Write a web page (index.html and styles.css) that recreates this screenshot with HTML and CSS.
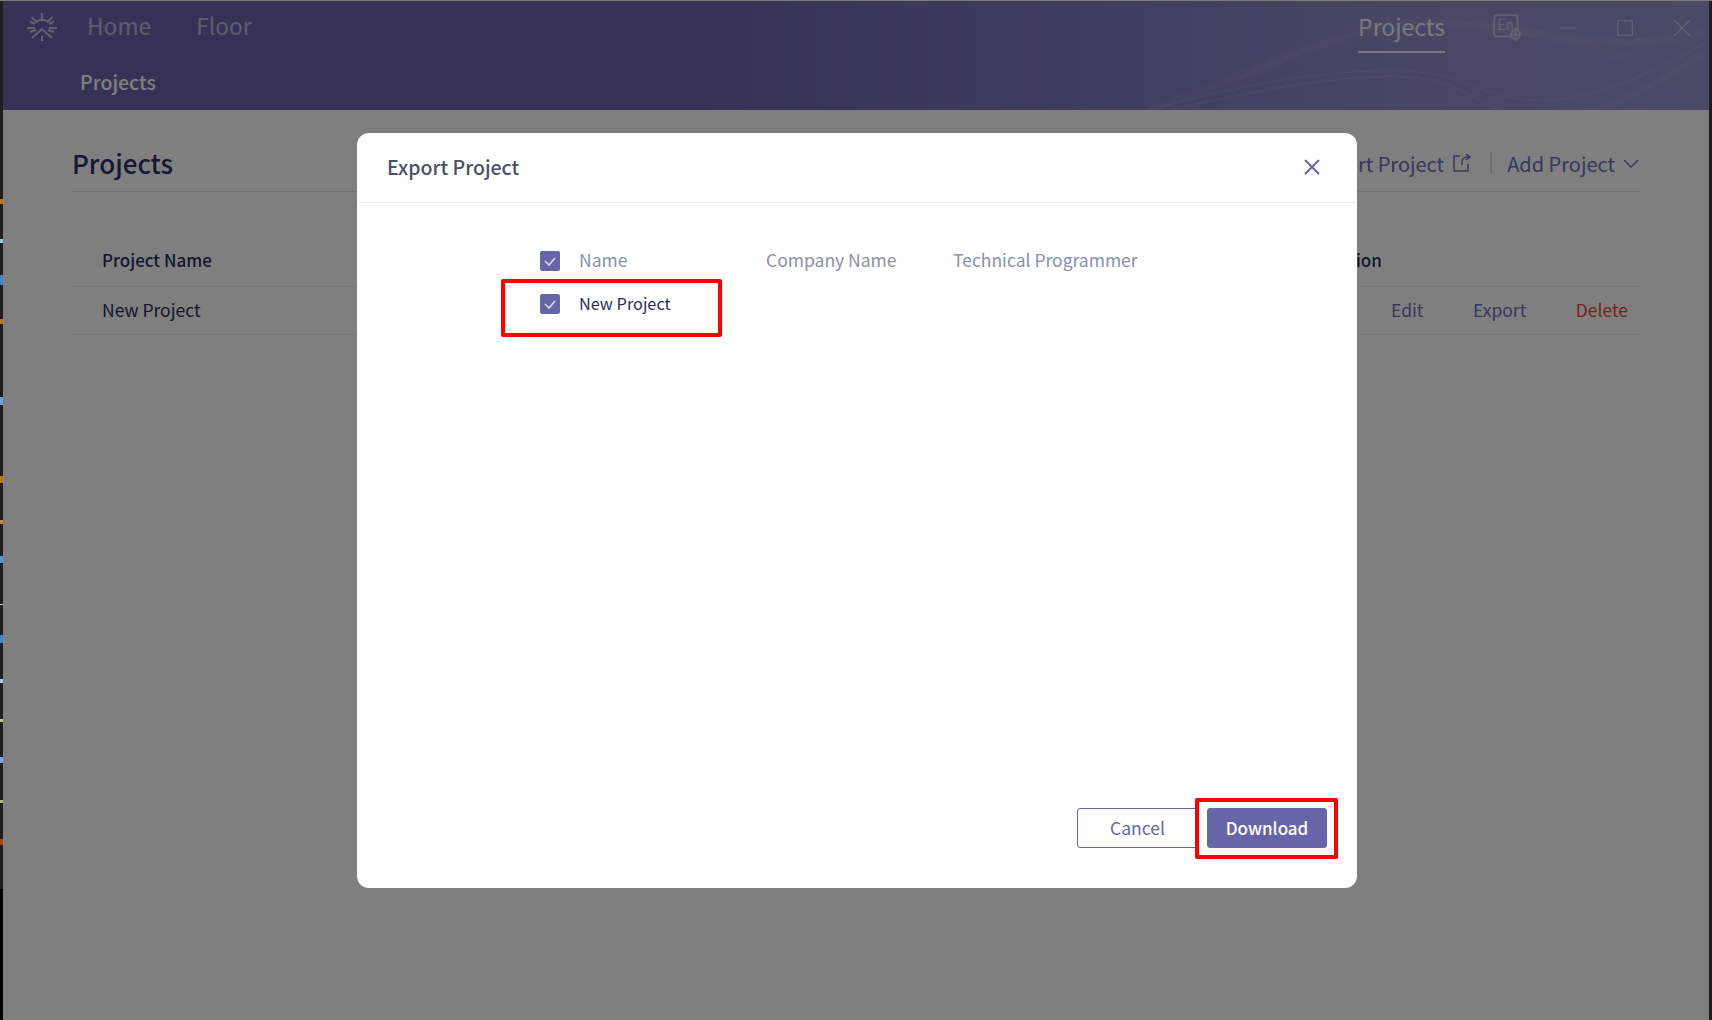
FILE: index.html
```html
<!DOCTYPE html>
<html lang="en">
<head>
  <meta charset="UTF-8">
  <title>Projects</title>
  <link rel="stylesheet" href="styles.css">
</head>
<body>
  <div class="strip strip-left"></div>
  <div class="app">
    <header class="header">
      <svg class="waves" viewBox="0 0 600 110" preserveAspectRatio="none" fill="none" stroke="#fff">
        <path d="M40 110C150 70 240 25 320 24C420 22 500 60 600 30" stroke-opacity=".05" stroke-width="8"/>
        <path d="M40 110C130 85 210 70 290 70C350 72 370 95 420 100C480 104 550 70 600 40" stroke-opacity=".12"/>
        <path d="M60 110C150 90 220 76 290 76C345 78 365 100 390 110" stroke-opacity=".14"/>
        <path d="M120 90C190 40 260 18 330 18C400 18 460 45 530 60" stroke-opacity=".03" stroke-width="10"/>
        <path d="M490 110C530 95 570 70 600 50" stroke-opacity=".05" stroke-width="6"/>
      </svg>
      <div class="topbar">
        <svg class="logo" viewBox="0 0 30 30" fill="none" stroke="#fff" stroke-width="2">
          <path d="M15 0v8M4.500 4l5.500 5.500M25.500 4L20 9.500M0 15h8M22 15h8M8 11l-5-2.500M22 11l5-2.500M3 19l6-2M27 19l-6-2M5 25l10-9 10 9M15 23v5M8.500 9.500a9 9 0 0 1 13 0"/>
        </svg>
        <nav class="main-nav">
          <a>Home</a>
          <a>Floor</a>
        </nav>
        <a class="nav-current">Projects</a>
        <svg class="lang-icon" viewBox="0 0 28 26" fill="none" stroke="#fff" stroke-width="1.800">
          <rect x="1" y="1" width="22" height="20" rx="3"/>
          <text x="4" y="15" class="lang-text">En</text>
          <circle cx="21" cy="19" r="4" fill="#8a8ac6"/>
          <path d="M21 13v12M16 19h10"/>
        </svg>
        <div class="window-controls">
          <svg viewBox="0 0 16 16" stroke="#fff" stroke-width="1.300"><path d="M0 8h16"/></svg>
          <svg viewBox="0 0 16 16" stroke="#fff" stroke-width="1.300" fill="none"><rect x=".7" y=".7" width="14.600" height="14.600"/></svg>
          <svg viewBox="0 0 16 16" stroke="#fff" stroke-width="1.300"><path d="M.5.5l15 15M15.500.5l-15 15"/></svg>
        </div>
      </div>
      <div class="subbar">Projects</div>
    </header>

    <main class="content">
      <div class="page-head">
        <h1>Projects</h1>
        <div class="page-actions">
          <span>Import Project</span>
          <svg class="share-icon" viewBox="0 0 20 20" fill="none" stroke="#6e6ebe" stroke-width="1.500">
            <path d="M8 3H2v15h14v-7M10 12V8c0-2 2-4 8-4M14 1l4 3-4 3"/>
          </svg>
          <i class="sep"></i>
          <span>Add Project</span>
          <svg class="chevron" viewBox="0 0 16 9" fill="none" stroke="#6e6ebe" stroke-width="1.400"><path d="M1 1l7 7 7-7"/></svg>
        </div>
      </div>
      <div class="table">
        <div class="row row-head">
          <div>Project Name</div>
          <div>Action</div>
        </div>
        <div class="row">
          <div>New Project</div>
          <div class="row-actions">
            <a>Edit</a>
            <a>Export</a>
            <a class="danger">Delete</a>
          </div>
        </div>
      </div>
    </main>

    <div class="overlay">
      <div class="modal">
        <div class="modal-head">
          <span>Export Project</span>
          <svg class="modal-close" viewBox="0 0 18 18" stroke="#6665a8" stroke-width="2"><path d="M2 2l14 14M16 2L2 16"/></svg>
        </div>
        <div class="modal-body">
          <div class="pick-row pick-head">
            <span class="check"><svg viewBox="0 0 20 20" fill="none" stroke="#d8d8ee" stroke-width="1.600"><path d="M5 10l4 4 6-7"/></svg></span>
            <span>Name</span>
            <span>Company Name</span>
            <span>Technical Programmer</span>
          </div>
          <div class="pick-row">
            <span class="check"><svg viewBox="0 0 20 20" fill="none" stroke="#d8d8ee" stroke-width="1.600"><path d="M5 10l4 4 6-7"/></svg></span>
            <span>New Project</span>
          </div>
          <div class="mark mark-row"></div>
        </div>
        <div class="modal-foot">
          <button class="btn">Cancel</button>
          <button class="btn btn-primary">Download</button>
          <div class="mark mark-btn"></div>
        </div>
      </div>
    </div>
  </div>
  <div class="strip strip-right"></div>
</body>
</html>
```

FILE: styles.css
```css
html, body {
  height: 100%;
  margin: 0;
  padding: 0;
}
body {
  display: flex;
  height: 1020px;
  overflow: hidden;
  box-sizing: border-box;
  border-top: 1px solid #7c7c70;
  background: #000;
  font-family: "Noto Sans CJK SC", "Noto Sans", sans-serif;
  color: #2c2c60;
}
.strip {
  flex: none;
  background: #1e1e1e;
}
.strip-left {
  width: 3px;
  background:
    linear-gradient(#000 0 0) 0 888px / 100% 132px no-repeat,
    linear-gradient(#c8701c 0 0) 0 198px / 100% 5px no-repeat,
    linear-gradient(#9cc8d0 0 0) 0 238px / 100% 4px no-repeat,
    linear-gradient(#3f86c8 0 0) 0 274px / 100% 10px no-repeat,
    linear-gradient(#c8701c 0 0) 0 318px / 100% 5px no-repeat,
    linear-gradient(#6ba0dc 0 0) 0 396px / 100% 8px no-repeat,
    linear-gradient(#c8701c 0 0) 0 475px / 100% 7px no-repeat,
    linear-gradient(#d08040 0 0) 0 519px / 100% 4px no-repeat,
    linear-gradient(#5a90e0 0 0) 0 555px / 100% 7px no-repeat,
    linear-gradient(#ccc 0 0) 0 603px / 100% 1px no-repeat,
    linear-gradient(#3f86c8 0 0) 0 634px / 100% 8px no-repeat,
    linear-gradient(#b0c8e0 0 0) 0 678px / 100% 4px no-repeat,
    linear-gradient(#d0c0a0 0 0) 0 718px / 100% 3px no-repeat,
    linear-gradient(#80a8e0 0 0) 0 756px / 100% 6px no-repeat,
    linear-gradient(#b0b090 0 0) 0 799px / 100% 3px no-repeat,
    linear-gradient(#a04818 0 0) 0 838px / 100% 6px no-repeat,
    #1e1e1e;
}
.strip-right {
  width: 3px;
}
.app {
  flex: 1;
  position: relative;
  display: flex;
  flex-direction: column;
  min-width: 0;
  background: #fff;
}

/* header */
.header {
  position: relative;
  height: 109px;
  flex: none;
  background: linear-gradient(90deg, #6866ae 0%, #6866ae 40%, #9090cc 85%, #9294cc 100%);
  color: #fff;
}
.waves {
  position: absolute;
  right: 0;
  top: 0;
  width: 600px;
  height: 109px;
}
.topbar {
  position: relative;
  display: flex;
  align-items: center;
  height: 54px;
  padding-left: 24px;
}
.logo {
  width: 30px;
  height: 30px;
  opacity: .6;
}
.main-nav {
  display: flex;
  gap: 45px;
  margin-left: 30px;
  margin-bottom: 5px;
  font-size: 22.800px;
  opacity: .55;
}
.nav-current {
  margin-left: auto;
  font-size: 23px;
  line-height: 34px;
  padding: 5px 0 8px;
  border-bottom: 2px solid #fff;
  opacity: .9;
}
.lang-icon {
  width: 30px;
  height: 28px;
  margin-left: 48px;
  opacity: .45;
}
.lang-text {
  font-size: 13px;
  stroke: none;
  fill: #fff;
}
.window-controls {
  display: flex;
  gap: 41px;
  margin-left: 37px;
  margin-right: 19px;
  opacity: .45;
}
.window-controls svg {
  width: 16px;
  height: 16px;
  display: block;
}
.subbar {
  position: relative;
  padding: 6px 0 0 77px;
  font-size: 19.500px;
  font-weight: 500;
  line-height: 42px;
}

/* page */
.content {
  padding: 0 68px 0 69px;
}
.page-head {
  display: flex;
  align-items: center;
  justify-content: space-between;
  box-sizing: border-box;
  height: 81px;
  margin-top: 1px;
  padding-top: 24px;
  border-bottom: 1px solid #e6e6ec;
}
.page-head h1 {
  margin: 0;
  font-size: 26px;
  font-weight: 500;
  color: #2e3068;
  line-height: 56px;
}
.page-actions {
  display: flex;
  align-items: center;
  font-size: 20px;
  color: #6e6ebe;
}
.share-icon {
  width: 20px;
  height: 20px;
  margin-left: 8px;
}
.sep {
  width: 2px;
  height: 22px;
  margin: 0 15px 0 18px;
  background: #dfdfea;
}
.chevron {
  width: 16px;
  height: 9px;
  margin: 0 2px 0 8px;
}
.table {
  margin-top: 45px;
}
.row {
  display: grid;
  grid-template-columns: 1fr 298px;
  align-items: center;
  box-sizing: border-box;
  height: 48px;
  padding: 0 13px 3px 30px;
  border-bottom: 1px solid #ececf2;
  font-size: 17.500px;
}
.row-head {
  height: 50px;
  padding-bottom: 5px;
  font-size: 17px;
  font-weight: 500;
}
.row-actions {
  display: flex;
  justify-content: flex-end;
  gap: 49.500px;
  color: #6e6ebe;
}
.danger {
  color: #f23c2a;
}

/* modal */
.overlay {
  position: absolute;
  inset: 0;
  background: rgba(0, 0, 0, .5);
}
.modal {
  position: absolute;
  left: 354px;
  top: 132px;
  width: 1000px;
  height: 755px;
  display: flex;
  flex-direction: column;
  background: #fff;
  border-radius: 12px;
}
.modal-head {
  display: flex;
  align-items: center;
  justify-content: space-between;
  height: 69px;
  flex: none;
  padding: 0 36px 0 30px;
  border-bottom: 1px solid #eeeef2;
  font-size: 19.500px;
  font-weight: 500;
  color: #4a5068;
}
.modal-head span {
  margin-bottom: 2px;
}
.modal-close {
  width: 18px;
  height: 18px;
  margin-bottom: 2px;
}
.modal-body {
  position: relative;
  flex: 1;
  padding: 37px 0 0 183px;
}
.pick-row {
  display: grid;
  grid-template-columns: 39px 187px 187px auto;
  justify-content: start;
  align-items: center;
  height: 43px;
  font-size: 16.300px;
  color: #2d2e63;
}
.pick-row span:not(.check) {
  margin-bottom: 5px;
}
.pick-head {
  height: 44px;
  font-size: 17.500px;
  color: #8b8fab;
}
.check {
  width: 20px;
  height: 20px;
  margin-bottom: 3px;
  border-radius: 2px;
  background: #6665a8;
}
.check svg {
  display: block;
}
.modal-foot {
  position: relative;
  display: flex;
  justify-content: flex-end;
  gap: 9px;
  flex: none;
  height: 80px;
  padding-right: 30px;
}
.btn {
  width: 121px;
  height: 40px;
  padding-bottom: 3px;
  border: 1px solid #6665a8;
  border-radius: 3px;
  background: #fff;
  font-family: inherit;
  font-size: 17.500px;
  color: #6665a8;
}
.btn-primary {
  width: 120px;
  background: #6665a8;
  color: #fff;
  font-size: 17px;
  font-weight: 500;
}

/* red annotation boxes */
.mark {
  position: absolute;
  box-sizing: border-box;
  border: 4px solid #f00;
  border-radius: 2px;
}
.mark-row {
  left: 144px;
  top: 76px;
  width: 221px;
  height: 58px;
}
.mark-btn {
  right: 19px;
  top: -10px;
  width: 143px;
  height: 61px;
}
```
